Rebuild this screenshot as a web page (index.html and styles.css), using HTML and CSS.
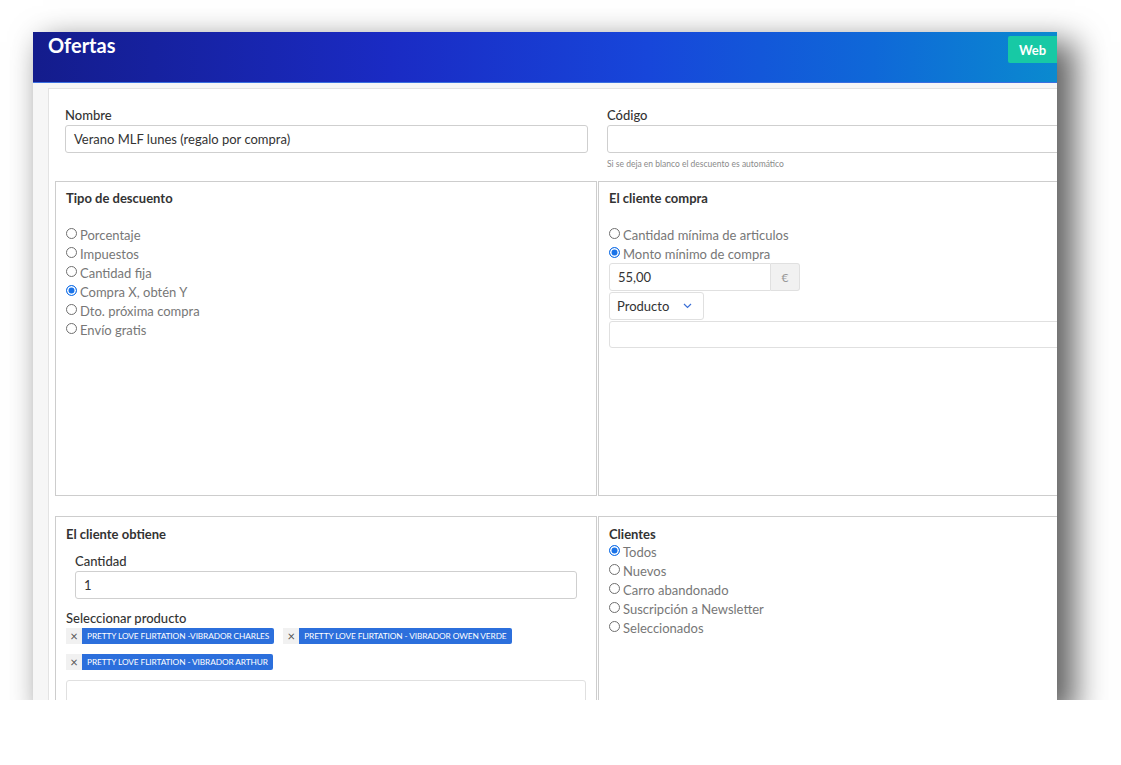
FILE: index.html
```html
<!DOCTYPE html>
<html lang="es">
<head>
<meta charset="utf-8">
<title>Ofertas</title>
<link rel="stylesheet" href="styles.css">
</head>
<body>
<div class="frame">
  <header class="topbar">
    <h1 class="title">Ofertas</h1>
    <span class="btn-web">Web</span>
  </header>
  <main class="content">
    <section class="card">
      <div class="top-row">
        <div class="field">
          <label class="label">Nombre</label>
          <div class="input">Verano MLF lunes (regalo por compra)</div>
        </div>
        <div class="field">
          <label class="label">Código</label>
          <div class="input"></div>
          <p class="hint">Si se deja en blanco el descuento es automático</p>
        </div>
      </div>

      <div class="panels">
        <div class="panel panel-tall">
          <h2 class="panel-title">Tipo de descuento</h2>
          <ul class="radios spaced">
            <li class="radio"><span class="dot"></span>Porcentaje</li>
            <li class="radio"><span class="dot"></span>Impuestos</li>
            <li class="radio"><span class="dot"></span>Cantidad fija</li>
            <li class="radio"><span class="dot on"></span>Compra X, obtén Y</li>
            <li class="radio"><span class="dot"></span>Dto. próxima compra</li>
            <li class="radio"><span class="dot"></span>Envío gratis</li>
          </ul>
        </div>
        <div class="panel panel-tall">
          <h2 class="panel-title">El cliente compra</h2>
          <ul class="radios spaced">
            <li class="radio"><span class="dot"></span>Cantidad mínima de articulos</li>
            <li class="radio"><span class="dot on"></span>Monto mínimo de compra</li>
          </ul>
          <div class="input-group">
            <div class="input amount">55,00</div>
            <span class="addon">€</span>
          </div>
          <div class="select">Producto
            <svg class="chev" width="9" height="6" viewBox="0 0 9 6"><path d="M1 1l3.5 3.5L8 1" fill="none" stroke="#3b6fd6" stroke-width="1.2"/></svg>
          </div>
          <div class="input wide"></div>
        </div>

        <div class="panel">
          <h2 class="panel-title">El cliente obtiene</h2>
          <div class="sub-field">
            <label class="label">Cantidad</label>
            <div class="input">1</div>
          </div>
          <label class="label sel-label">Seleccionar producto</label>
          <div class="tags">
            <span class="tag"><span class="tag-x">×</span><span class="tag-text">PRETTY LOVE FLIRTATION -VIBRADOR CHARLES</span></span>
            <span class="tag"><span class="tag-x">×</span><span class="tag-text">PRETTY LOVE FLIRTATION - VIBRADOR OWEN VERDE</span></span>
            <span class="tag"><span class="tag-x">×</span><span class="tag-text">PRETTY LOVE FLIRTATION - VIBRADOR ARTHUR</span></span>
          </div>
          <div class="input tall"></div>
        </div>
        <div class="panel">
          <h2 class="panel-title tight">Clientes</h2>
          <ul class="radios">
            <li class="radio"><span class="dot on"></span>Todos</li>
            <li class="radio"><span class="dot"></span>Nuevos</li>
            <li class="radio"><span class="dot"></span>Carro abandonado</li>
            <li class="radio"><span class="dot"></span>Suscripción a Newsletter</li>
            <li class="radio"><span class="dot"></span>Seleccionados</li>
          </ul>
        </div>
      </div>
    </section>
  </main>
</div>
</body>
</html>
```

FILE: styles.css
```css
* { box-sizing: border-box; }

html, body {
  margin: 0;
  padding: 0;
  background: #ffffff;
}

body {
  font-family: "Lato", "Noto Sans", sans-serif;
  color: #333;
  padding: 32px 0 0 33px;
}

.frame {
  width: 1024px;
  height: 668px;
  overflow: hidden;
  background: #f6f6f6;
  box-shadow: 14px 14px 30px 4px rgba(0, 0, 0, 0.62);
  display: flex;
  flex-direction: column;
}

.topbar {
  flex: 0 0 51px;
  display: flex;
  justify-content: space-between;
  align-items: flex-start;
  padding: 0 0 0 15px;
  background: linear-gradient(90deg, #141c8c 0%, #1a2bc4 35%, #1746da 60%, #0f68d8 82%, #0a8acf 100%);
  border-bottom: 1px solid #3a6fe0;
}

.title {
  margin: 0;
  font-size: 20px;
  line-height: 26px;
  font-weight: 700;
  color: #fff;
}

.btn-web {
  margin-top: 4px;
  width: 49px;
  height: 27px;
  background: #17c9a5;
  color: #fff;
  font-size: 13px;
  font-weight: 700;
  display: flex;
  align-items: center;
  justify-content: center;
  border-radius: 2px 0 0 2px;
}

.content {
  flex: 1;
  padding: 5px 0 0 15px;
}

.card {
  width: 1099px;
  background: #fff;
  border: 1px solid #e3e3e3;
  padding: 18px 6px 0 6px;
  min-height: 640px;
}

.top-row {
  display: grid;
  grid-template-columns: 523px 523px;
  column-gap: 19px;
  padding: 0 10px;
}

.label {
  display: block;
  font-size: 13px;
  line-height: 16px;
  font-weight: 500;
  color: #333;
  margin-bottom: 2px;
}

.input {
  height: 28px;
  border: 1px solid #cfcfcf;
  border-radius: 3px;
  background: #fff;
  font-size: 13px;
  line-height: 26px;
  padding: 0 8px;
  color: #333;
}

.hint {
  margin: 5px 0 0 0;
  font-size: 8.5px;
  line-height: 12px;
  color: #8a8a8a;
}

.panels {
  margin-top: 11px;
  display: grid;
  grid-template-columns: 542px 542px;
  column-gap: 1px;
  row-gap: 20px;
}

.panel {
  border: 1px solid #cdcdcd;
  padding: 9px 10px 0 10px;
  min-height: 200px;
}

.panel-tall {
  height: 315px;
  padding-top: 8px;
}

.panel-title {
  margin: 0;
  font-size: 13px;
  line-height: 16px;
  font-weight: 700;
  color: #333;
}

.radios {
  list-style: none;
  margin: 0;
  padding: 0;
}

.radios.spaced {
  margin-top: 19px;
}

.radio {
  display: flex;
  align-items: center;
  height: 19px;
  font-size: 13px;
  color: #777;
}

.dot {
  width: 11px;
  height: 11px;
  border-radius: 50%;
  border: 1px solid #6f6f6f;
  background: #fff;
  margin-right: 3px;
  flex: 0 0 auto;
  position: relative;
  top: -1px;
}

.dot.on {
  border-color: #1a73e8;
  background: #1a73e8;
  box-shadow: inset 0 0 0 1.5px #fff;
}

.input-group {
  display: flex;
  width: 191px;
  height: 28px;
}

.input-group .amount {
  flex: 1;
  border-radius: 3px 0 0 3px;
  border-color: #e0e0e0;
}

.addon {
  width: 29px;
  border: 1px solid #e0e0e0;
  border-left: 0;
  border-radius: 0 3px 3px 0;
  background: #f1f1f1;
  color: #999;
  font-size: 12px;
  display: flex;
  align-items: center;
  justify-content: center;
}

.select {
  margin-top: 1px;
  width: 95px;
  height: 28px;
  border: 1px solid #e0e0e0;
  border-radius: 3px;
  font-size: 13px;
  line-height: 26px;
  padding: 0 0 0 7px;
  color: #333;
  display: flex;
  align-items: center;
}

.chev {
  margin-left: 14px;
}

.input.wide {
  margin-top: 1px;
  height: 27px;
  border-color: #e0e0e0;
}

.sub-field {
  padding: 0 9px;
  margin-top: 11px;
}

.sub-field .label {
  margin-bottom: 2px;
}

.sel-label {
  margin-top: 11px;
  margin-bottom: 2px;
}

.tags {
  display: flex;
  flex-wrap: wrap;
  column-gap: 9px;
  row-gap: 10px;
}

.tag {
  display: flex;
  height: 16px;
}

.tag-x {
  width: 16px;
  background: #f1f1f1;
  color: #555;
  font-size: 13px;
  line-height: 16px;
  text-align: center;
}

.tag-text {
  background: #2c6fdc;
  color: #fff;
  font-size: 8.3px;
  line-height: 16px;
  padding: 0 5px;
  border-radius: 0 2px 2px 0;
  letter-spacing: -0.1px;
  white-space: nowrap;
}

.input.tall {
  margin-top: 10px;
  height: 40px;
  border-color: #e0e0e0;
}

.panel-title.tight + .radios {
  margin-top: 0;
}
```
